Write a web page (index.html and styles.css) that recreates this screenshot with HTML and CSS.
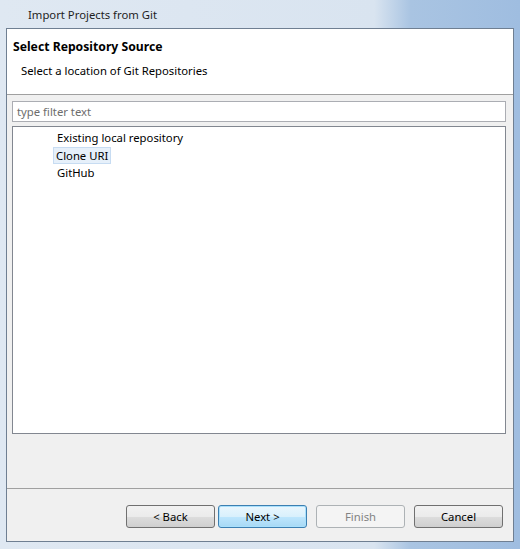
FILE: index.html
```html
<!DOCTYPE html>
<html>
<head>
<meta charset="utf-8">
<link rel="stylesheet" href="styles.css">
</head>
<body>
<div class="window">
  <div class="titlebar"><span class="title">Import Projects from Git</span></div>
  <div class="client">
    <div class="header">
      <div class="h-title">Select Repository Source</div>
      <div class="h-sub">Select a location of Git Repositories</div>
    </div>
    <div class="body">
      <div class="filter">type filter text</div>
      <div class="tree">
        <div class="item">Existing local repository</div>
        <div class="item"><span class="sel">Clone URI</span></div>
        <div class="item">GitHub</div>
      </div>
    </div>
    <div class="footer">
      <button class="btn">&lt; Back</button>
      <button class="btn default">Next &gt;</button>
      <button class="btn disabled">Finish</button>
      <button class="btn">Cancel</button>
    </div>
  </div>
</div>
</body>
</html>
```
FILE: styles.css
```css
html, body {
  margin: 0;
  padding: 0;
}
body {
  width: 520px;
  height: 549px;
  overflow: hidden;
  font-family: "Noto Sans", "Open Sans", sans-serif;
  font-size: 11.3px;
  color: #000;
}
.window {
  width: 520px;
  height: 549px;
  box-sizing: border-box;
  display: flex;
  flex-direction: column;
  background: linear-gradient(to right, #dfe8f2 0%, #d9e4f0 72%, #a9c4e2 79%, #9fbde0 100%);
  padding: 0 6px 7px 6px;
}
.titlebar {
  height: 28px;
  display: flex;
  align-items: center;
  padding-left: 22px;
  flex: none;
}
.title {
  color: #1e1e1e;
  padding-top: 1px;
}
.client {
  flex: 1;
  display: flex;
  flex-direction: column;
  border: 1px solid #6f7f92;
  background: #f0f0f0;
}
.header {
  height: 66px;
  background: #fff;
  border-bottom: 1px solid #a0a0a0;
  box-sizing: border-box;
  padding: 10px 0 0 6px;
  flex: none;
}
.h-title {
  font-weight: bold;
  font-size: 12.2px;
  line-height: 16px;
}
.h-sub {
  line-height: 16px;
  margin-top: 8px;
  padding-left: 8px;
}
.body {
  padding: 6px 7px 0 5px;
  display: flex;
  flex-direction: column;
  gap: 4px;
}
.filter {
  height: 21px;
  box-sizing: border-box;
  border: 1px solid #abadb3;
  background: #fff;
  color: #6d6d6d;
  padding-left: 4px;
  line-height: 19px;
}
.tree {
  height: 308px;
  box-sizing: border-box;
  border: 1px solid #828790;
  background: #fff;
  padding: 2px 0 0 44px;
}
.item {
  height: 17.5px;
  line-height: 17.5px;
}
.sel {
  display: inline-block;
  background: #e6f0fa;
  border: 1px solid #c7dcf2;
  line-height: 15px;
  padding: 0 2px 0 2px;
  margin-left: -4px;
}
.footer {
  margin-top: auto;
  border-top: 1px solid #a0a0a0;
  height: 53px;
  box-sizing: border-box;
  display: flex;
  justify-content: flex-end;
  padding: 16px 10px 0 0;
  gap: 3px;
}
.btn {
  width: 89px;
  height: 23px;
  box-sizing: border-box;
  font-family: inherit;
  font-size: 11.3px;
  border: 1px solid #707070;
  border-radius: 3px;
  background: linear-gradient(to bottom, #f2f2f2 0%, #ebebeb 50%, #dddddd 51%, #cfcfcf 100%);
  color: #000;
  padding: 0 0 1px 0;
}
.btn.default {
  border-color: #3c7fb1;
  background: linear-gradient(to bottom, #eaf6fd 0%, #d9f0fc 50%, #bee6fd 51%, #a7d9f5 100%);
  box-shadow: inset 0 0 0 1px #a9e0fc;
}
.btn.disabled {
  margin-left: 6px;
  margin-right: 6px;
  border-color: #adb2b5;
  background: #f4f4f4;
  color: #838383;
}
```
